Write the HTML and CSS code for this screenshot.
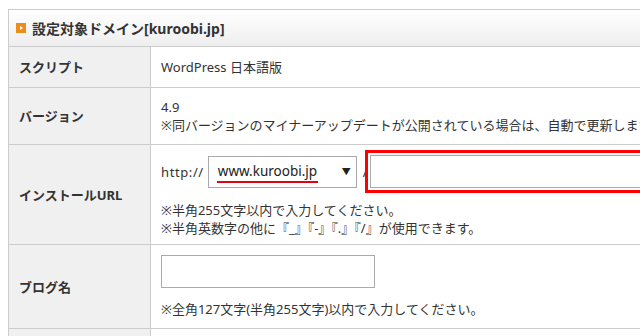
FILE: index.html
```html
<!DOCTYPE html>
<html lang="ja">
<head>
    <meta charset="UTF-8">
    <meta name="viewport" content="width=device-width, initial-scale=1.0">
    <title>WordPress簡単インストール</title>
    <link rel="stylesheet" href="styles.css">
</head>
<body>

    <div class="panel">
        <div class="panel-head">
            <svg class="icon" width="10" height="10" viewBox="0 0 10 10">
                <rect width="10" height="10" fill="#f08a18"/>
                <polygon points="4,3 7,5 4,7" fill="#fff"/>
            </svg>
            設定対象ドメイン[kuroobi.jp]
        </div>

        <table class="form">
            <tr class="row-script">
                <th>スクリプト</th>
                <td>WordPress 日本語版</td>
            </tr>
            <tr>
                <th>バージョン</th>
                <td>
                    4.9<br>
                    ※同バージョンのマイナーアップデートが公開されている場合は、自動で更新します。
                </td>
            </tr>
            <tr>
                <th>インストールURL</th>
                <td>
                    <div class="url-line">
                        <span class="scheme">http://</span>
                        <div class="select">
                            <span class="select-value">www.kuroobi.jp</span>
                            <span class="select-arrow">▼</span>
                        </div>
                        <span class="slash">/</span>
                        <input type="text" class="text-input url-input">
                    </div>
                    <p class="note">
                        ※半角255文字以内で入力してください。<br>
                        ※半角英数字の他に『_』『-』『.』『/』が使用できます。
                    </p>
                </td>
            </tr>
            <tr>
                <th>ブログ名</th>
                <td>
                    <input type="text" class="text-input blog-input">
                    <p class="note note-blog">※全角127文字(半角255文字)以内で入力してください。</p>
                </td>
            </tr>
            <tr class="row-script">
                <th></th>
                <td></td>
            </tr>
        </table>
    </div>

</body>
</html>
```

FILE: styles.css
```css
body {
    margin: 9px 0 0 8px;
    font-family: "Noto Sans", "Noto Sans CJK JP", sans-serif;
    font-size: 13px;
    color: #333;
    background: #fff;
    overflow: hidden;
}
.panel {
    width: 900px;
    border: 1px solid #ccc;
    border-bottom: none;
}
.panel-head {
    display: flex;
    align-items: center;
    height: 36px;
    padding-left: 7px;
    font-size: 14px;
    font-weight: bold;
    background: linear-gradient(#ffffff, #eeeeee);
    border-bottom: 1px solid #ccc;
}
.icon {
    margin-right: 6px;
}
.form {
    width: 100%;
    border-collapse: collapse;
}
.form th,
.form td {
    border-top: 1px solid #ccc;
    border-bottom: 1px solid #ccc;
    line-height: 18px;
}
.form tr:first-child th,
.form tr:first-child td {
    border-top: none;
}
.form th {
    width: 131px;
    padding: 0 0 0 10px;
    text-align: left;
    font-weight: bold;
    background: #f0f0f0;
    border-right: 1px solid #ccc;
}
.form td {
    padding: 10px 10px;
    white-space: nowrap;
}
.row-script td {
    height: 20px;
}
.url-line {
    display: flex;
    align-items: center;
    height: 33px;
}
.scheme {
    letter-spacing: 0.6px;
}
.select {
    display: flex;
    align-items: center;
    justify-content: space-between;
    box-sizing: border-box;
    width: 149px;
    height: 32px;
    margin-left: 4px;
    padding: 0 5px 0 8px;
    border: 1px solid #aaa;
    font-size: 13.5px;
    color: #222;
}
.select-value {
    padding: 0 1px;
    line-height: 20px;
    border-bottom: 2px solid #e60012;
}
.select-arrow {
    font-size: 9px;
}
.slash {
    margin: 0 2px 0 6px;
}
.text-input {
    box-sizing: border-box;
    height: 33px;
    border: 1px solid #aaa;
    font-size: 14px;
    margin: 0;
}
.url-input {
    width: 300px;
    outline: 3px solid #ff0000;
    outline-offset: 2px;
}
.blog-input {
    display: block;
    width: 214px;
}
.note {
    margin: 13px 0 -3px;
}
.note-blog {
    margin: 12px 0 0;
}
```
